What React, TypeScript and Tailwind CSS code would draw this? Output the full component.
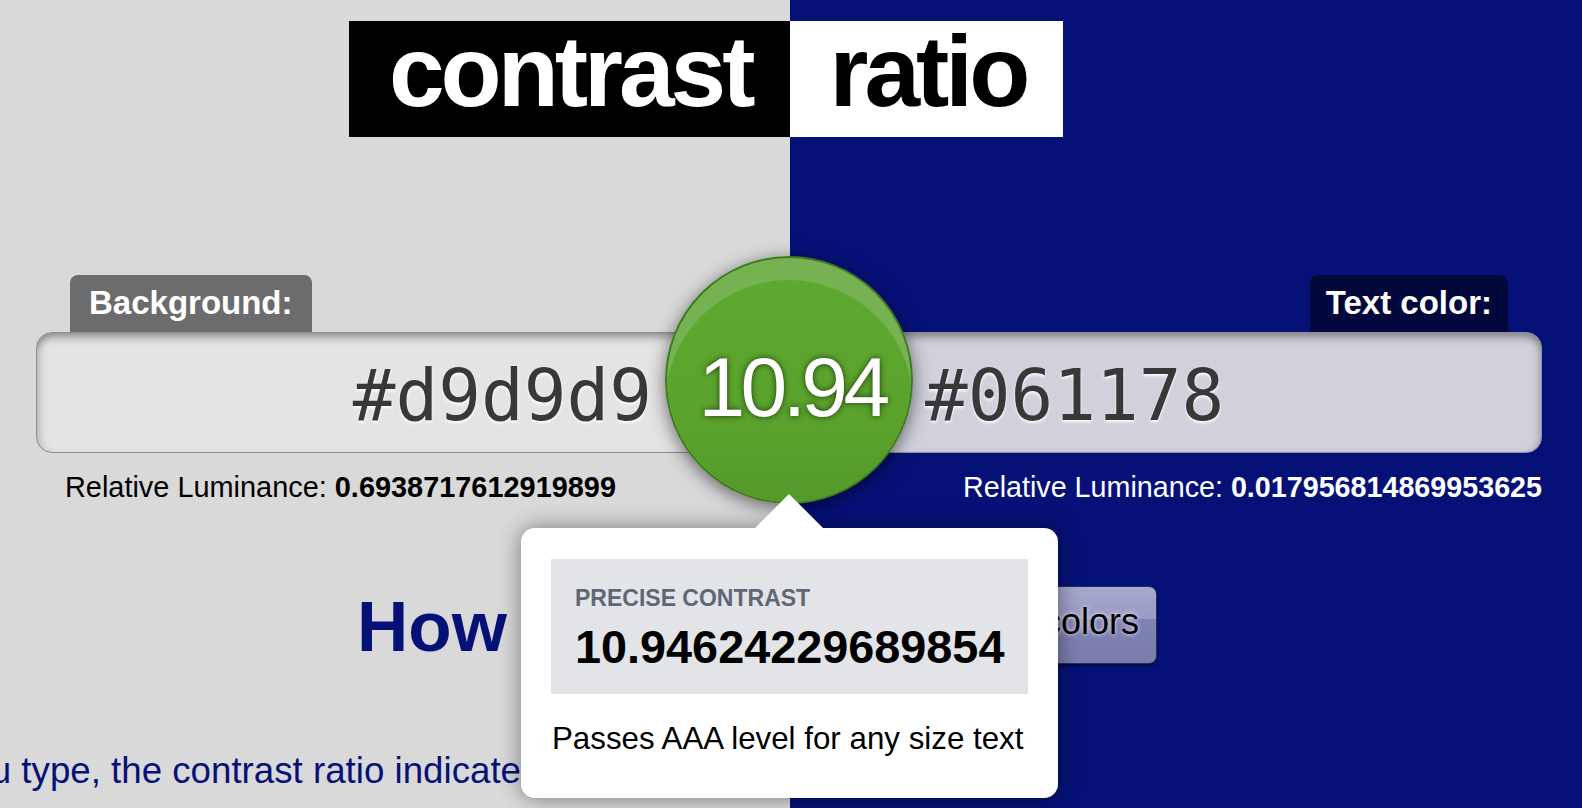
const sans = "font-['Liberation_Sans',Arial,sans-serif]"

function Logo() {
  return (
    <h1 className="flex pt-[21px] pl-[349px] text-[100px] font-bold leading-none tracking-[-0.04em]">
      <span className="bg-black text-white pl-[40px] pr-[38px] pb-[16px]">contrast</span>
      <span className="bg-white text-black pl-[40px] pr-[37px] pb-[16px]">ratio</span>
    </h1>
  )
}

function ColorInput({ value, side }: { value: string; side: 'left' | 'right' }) {
  const isLeft = side === 'left'
  return (
    <div
      className={`h-[121px] rounded-[16px] border pt-[27px] font-['DejaVu_Sans_Mono',monospace] text-[71px] leading-none text-[#383838] [text-shadow:0_2px_3px_rgba(255,255,255,0.95)] shadow-[inset_0_10px_10px_-6px_rgba(0,0,0,0.38),inset_8px_0_8px_-6px_rgba(0,0,0,0.22),inset_-8px_0_8px_-6px_rgba(0,0,0,0.22)] ${
        isLeft
          ? 'bg-[#e4e4e4] border-[#8e8e8e] text-right pr-[136px]'
          : 'bg-[#d1d1dc] border-[#8f8fa0] text-left pl-[135px]'
      }`}
    >
      {value}
    </div>
  )
}

function RatioBadge() {
  return (
    <div className="absolute left-[665px] top-[256px] h-[248px] w-[248px] rounded-full shadow-[0_4px_18px_rgba(0,0,0,0.55)]">
      <div className="relative h-full w-full overflow-hidden rounded-full border-2 border-[#3e7a1e] bg-[#76b251]">
        <div className="absolute left-[-2px] top-[22px] h-[248px] w-[248px] rounded-full bg-[linear-gradient(to_bottom,#5ea92f,#5aa22c_60%,#52952a)]" />
        <div className="absolute inset-0 flex items-center justify-center pt-[14px] pl-[6px] text-[84px] leading-none tracking-[-0.055em] text-white [text-shadow:0_0_6px_rgba(0,0,0,0.65)]">
          10.94
        </div>
      </div>
    </div>
  )
}

function Tooltip() {
  return (
    <div className="absolute left-[521px] top-[528px] h-[270px] w-[537px] rounded-[14px] bg-white px-[30px] pt-[31px] shadow-[0_0_22px_rgba(0,0,0,0.45)]">
      <div className="absolute -top-[34px] left-[234px] h-0 w-0 border-x-[34px] border-b-[34px] border-x-transparent border-b-white" />
      <div className="bg-[#e3e4e8] px-[24px] pt-[26px] pb-[19px]">
        <div className="text-[23px] font-bold leading-[1.15] text-[#5f6775]">PRECISE CONTRAST</div>
        <div className="mt-[10px] text-[46.8px] font-bold leading-[1.15] text-black">10.94624229689854</div>
      </div>
      <p className="mt-[27px] pl-[1px] text-[31.3px] leading-[1.15] text-black">Passes AAA level for any size text</p>
    </div>
  )
}

export default function App() {
  return (
    <div className={`relative h-[808px] w-full overflow-hidden bg-[linear-gradient(to_right,#d9d9d9_790px,#061178_790px)] ${sans}`}>
      <Logo />

      <div className="mt-[138px] flex pl-[36px]">
        <div className="flex w-[753px] flex-col">
          <div className="ml-[34px] self-start rounded-t-[8px] bg-black/50 px-[19px] pt-[9px] pb-[10px] text-[33px] font-bold leading-[1.15] text-white">
            Background:
          </div>
          <ColorInput value="#d9d9d9" side="left" />
          <div className="ml-[29px] mt-[18px] text-[28.9px] leading-[1.15] text-black">
            Relative Luminance: <b>0.6938717612919899</b>
          </div>
        </div>
        <div className="flex w-[753px] flex-col">
          <div className="mr-[34px] self-end rounded-t-[8px] bg-black/50 px-[16px] pt-[9px] pb-[10px] text-[33px] font-bold leading-[1.15] text-white">
            Text color:
          </div>
          <ColorInput value="#061178" side="right" />
          <div className="mt-[18px] text-right text-[28.7px] leading-[1.15] text-white">
            Relative Luminance: <b>0.017956814869953625</b>
          </div>
        </div>
      </div>

      <div className="mt-[82px] flex items-start pl-[357px]">
        <h2 className="text-[71px] font-bold leading-[1.15] text-[#061178]">How it works</h2>
        <button className="ml-[130px] rounded-[8px] border border-[#2a2c55] bg-[linear-gradient(to_bottom,#a6a7cc,#9a9cc5_42%,#8082b4_42%,#7a7cae)] px-[17px] pt-[14px] pb-[20px] text-[36px] leading-[1.15] text-black shadow-[0_2px_3px_rgba(0,0,0,0.5)] [text-shadow:0_0_4px_rgba(255,255,255,0.9)]">
          Swap colors
        </button>
      </div>

      <p className="mt-[82px] ml-[-101px] whitespace-nowrap text-[36.7px] leading-[1.15] text-[#061178]">
        As you type, the contrast ratio indicates what WCAG level the pair of colors passes.
      </p>

      <RatioBadge />
      <Tooltip />
    </div>
  )
}
